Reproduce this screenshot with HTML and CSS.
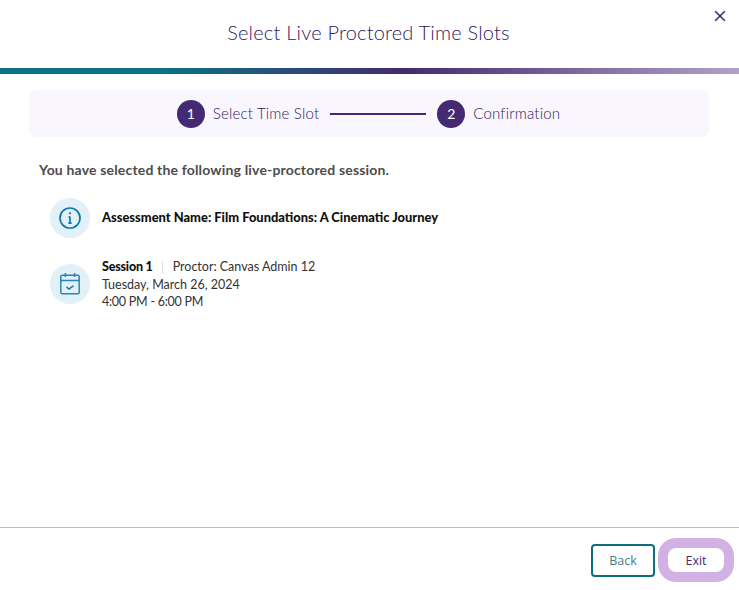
FILE: index.html
```html
<!DOCTYPE html>
<html lang="en">
<head>
<meta charset="utf-8">
<title>Select Live Proctored Time Slots</title>
<link rel="stylesheet" href="styles.css">
</head>
<body>
<div class="modal">
  <header class="head">
    <h1 class="title">Select Live Proctored Time Slots</h1>
    <button class="close" aria-label="Close">
      <svg width="12" height="12" viewBox="0 0 12 12"><path d="M1.2 1.2 10.8 10.8M10.8 1.2 1.2 10.8" stroke="#3f2a6e" stroke-width="1.6" fill="none"/></svg>
    </button>
  </header>
  <div class="bar"></div>
  <main class="body">
    <div class="stepper">
      <span class="num">1</span><span class="label">Select Time Slot</span>
      <span class="line"></span>
      <span class="num">2</span><span class="label">Confirmation</span>
    </div>
    <p class="lead">You have selected the following live-proctored session.</p>
    <div class="row row-info">
      <span class="badge">
        <svg width="24" height="24" viewBox="0 0 24 24" fill="none" stroke="#0f78a8" stroke-width="1.7"><circle cx="12" cy="12" r="10"/><path d="M12 10.8v6.4M10.4 17.2h3.2M10.6 10.8H12"/><circle cx="12" cy="7.3" r=".7" fill="#0f78a8" stroke-width="1"/></svg>
      </span>
      <strong class="name">Assessment Name: Film Foundations: A Cinematic Journey</strong>
    </div>
    <div class="row row-session">
      <span class="badge">
        <svg width="22" height="24" viewBox="0 0 22 24" fill="none" stroke="#2a86b4" stroke-width="1.5"><rect x="1.8" y="3.2" width="18.4" height="18.6" rx="1.5"/><path d="M1.8 8.6h18.4M6.4 1v4M15.6 1v4"/><path d="m7.4 14.8 2.4 2.2 4.6-3.2" stroke="#0f78a8"/></svg>
      </span>
      <div class="session">
        <div class="session-top"><strong>Session 1</strong><span class="sep"></span><span>Proctor: Canvas Admin 12</span></div>
        <div>Tuesday, March 26, 2024</div>
        <div class="time">4:00 PM - 6:00 PM</div>
      </div>
    </div>
  </main>
  <footer class="foot">
    <button class="btn back">Back</button>
    <button class="btn exit">Exit</button>
  </footer>
</div>
</body>
</html>
```
FILE: styles.css
```css
* { box-sizing: border-box; }
html, body { margin: 0; height: 100%; }
body { background: #fff; font-family: "Lato", "Liberation Sans", sans-serif; color: #222; overflow: hidden; }
.modal { width: 739px; height: 590px; display: flex; flex-direction: column; }
.head { height: 68px; position: relative; display: flex; align-items: center; justify-content: center; padding: 0 2px 4px 0; }
.title { margin: 0; font-size: 20px; font-weight: 300; color: #2f1a60; letter-spacing: .2px; }
.close { position: absolute; top: 10px; right: 13px; width: 12px; height: 12px; padding: 0; border: 0; background: none; display: flex; }
.bar { height: 6px; background: linear-gradient(90deg, #0b7285 0%, #0b7285 22%, #452a70 55%, #b3a1c9 100%); }
.body { flex: 1; padding: 16px 30px 0 29px; }
.stepper { height: 47px; background: #f9f6fd; border-radius: 8px; display: flex; align-items: center; justify-content: center; color: #2f1a60; font-size: 15px; padding-right: 1px; }
.num { width: 28px; height: 28px; border-radius: 50%; background: #432a72; color: #fff; display: flex; align-items: center; justify-content: center; font-size: 14px; }
.label { margin-left: 8px; padding-bottom: 2px; font-weight: 300; letter-spacing: .2px; }
.line { width: 96px; height: 2px; background: #432a72; margin: 0 11px; }
.lead { margin: 24px 0 0 10px; font-size: 14px; font-weight: 700; color: #4c4c4c; line-height: 17px; letter-spacing: .17px; }
.row { display: flex; margin-left: 21px; gap: 12px; }
.row-info { margin-top: 20px; align-items: center; }
.row-session { margin-top: 19px; align-items: center; }
.badge { width: 40px; height: 40px; border-radius: 50%; background: #e2f0f7; display: flex; align-items: center; justify-content: center; flex: none; }
.name { font-size: 12.9px; color: #111; font-weight: 900; padding-bottom: 3px; }
.session { font-size: 12.5px; line-height: 17.5px; color: #333; padding-top: 1px; }
.session strong { color: #111; font-weight: 900; letter-spacing: -.2px; }
.session-top { display: flex; align-items: center; }
.sep { width: 1px; height: 12px; background: #ddd; margin: 0 10px 0 9px; }
.time { letter-spacing: -.25px; }
.foot { height: 63px; border-top: 1px solid #bbb; display: flex; justify-content: flex-end; align-items: flex-start; padding: 16px 15px 0 0; gap: 13px; }
.btn { width: 64px; height: 33px; font: 400 12.5px "Open Sans", "Liberation Sans", sans-serif; border-radius: 4px; background: #fff; padding: 0; }
.back { border: 2px solid #0b6f80; color: #3d7f90; }
.exit { width: 56px; height: 24px; margin-top: 4px; border: 0; border-radius: 8px; color: #432a72; box-shadow: 0 0 0 10px #d2b1e4; }
```
